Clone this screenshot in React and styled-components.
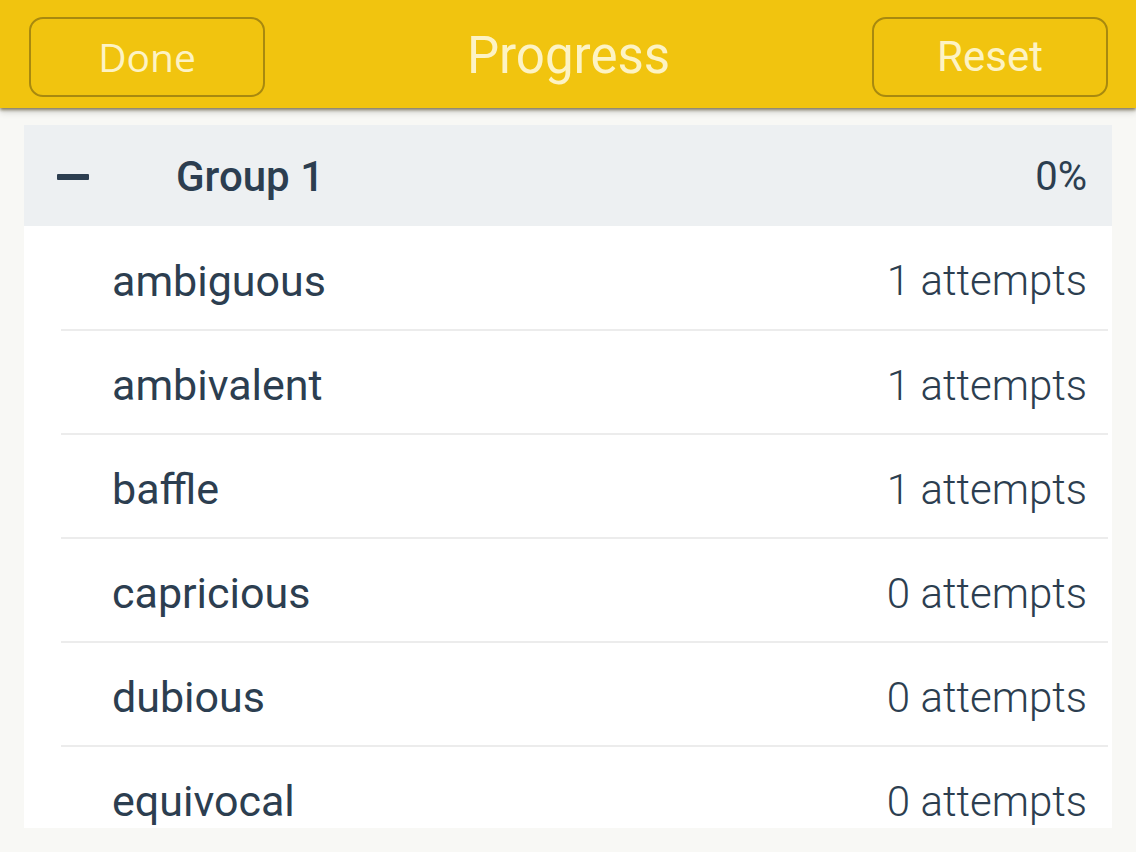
import React from "react";
import styled, { createGlobalStyle } from "styled-components";

const Global = createGlobalStyle`
  html, body { margin: 0; padding: 0; }
  body {
    background: #f8f8f5;
    font-family: Roboto, "Liberation Sans", sans-serif;
    color: #2c3e50;
    width: 1136px;
    height: 852px;
    overflow: hidden;
  }
`;

const Page = styled.div`
  display: flex;
  flex-direction: column;
  height: 852px;
`;

const Header = styled.header`
  position: relative;
  z-index: 1;
  height: 108px;
  background: #f1c40f;
  box-shadow: 0 2px 3px rgba(60, 45, 0, 0.55), 0 5px 6px rgba(0, 0, 0, 0.12);
  display: flex;
  align-items: center;
  justify-content: space-between;
  padding: 0 28px 0 29px;
  box-sizing: border-box;
`;

const HeaderButton = styled.button`
  width: 236px;
  height: 80px;
  margin-top: 5px;
  border: 2px solid #a8890f;
  border-radius: 14px;
  background: transparent;
  color: #fdf3c4;
  font-family: ${(p) => (p.$open ? '"Open Sans", "DejaVu Sans", sans-serif' : 'Roboto, "Liberation Sans", sans-serif')};
  font-size: ${(p) => (p.$open ? "39px" : "42px")};
  font-weight: 400;
  padding: 0;
  display: flex;
  align-items: center;
  justify-content: center;
  box-sizing: border-box;
`;

const Title = styled.h1`
  margin: 2px 0 0 0;
  font-family: Roboto, "Liberation Sans", sans-serif;
  font-weight: 400;
  font-size: 51px;
  color: #fdf3c4;
`;

const Content = styled.main`
  padding: 17px 24px 0 24px;
  flex: 1;
  overflow: hidden;
`;

const Card = styled.section`
  background: #ffffff;
  height: 703px;
  overflow: hidden;
`;

const GroupHeader = styled.div`
  height: 101px;
  background: #edf0f2;
  display: flex;
  align-items: center;
  padding: 2px 25px 0 33px;
  box-sizing: border-box;
`;

const Minus = styled.span`
  width: 32px;
  height: 6px;
  background: #2c3e50;
  border-radius: 1px;
  margin-right: 87px;
`;

const GroupName = styled.span`
  font-size: 42px;
  font-weight: 500;
  flex: 1;
`;

const Percent = styled.span`
  font-size: 40px;
  font-weight: 400;
`;

const Row = styled.div`
  height: 104px;
  margin: 0 4px 0 37px;
  display: flex;
  align-items: center;
  justify-content: space-between;
  padding: 6px 21px 0 51px;
  border-bottom: 2px solid #ececec;
  box-sizing: border-box;
  &:first-of-type { height: 105px; }
`;

const Word = styled.span`
  font-size: 43px;
  font-weight: 400;
`;

const Attempts = styled.span`
  font-size: 42px;
  font-weight: 300;
`;

const words = [
  ["ambiguous", 1],
  ["ambivalent", 1],
  ["baffle", 1],
  ["capricious", 0],
  ["dubious", 0],
  ["equivocal", 0],
];

export default function App() {
  return (
    <Page>
      <Global />
      <Header>
        <HeaderButton $open>Done</HeaderButton>
        <Title>Progress</Title>
        <HeaderButton>Reset</HeaderButton>
      </Header>
      <Content>
        <Card>
          <GroupHeader>
            <Minus />
            <GroupName>Group 1</GroupName>
            <Percent>0%</Percent>
          </GroupHeader>
          <div>
            {words.map(([w, n]) => (
              <Row key={w}>
                <Word>{w}</Word>
                <Attempts>{n} attempts</Attempts>
              </Row>
            ))}
          </div>
        </Card>
      </Content>
    </Page>
  );
}
